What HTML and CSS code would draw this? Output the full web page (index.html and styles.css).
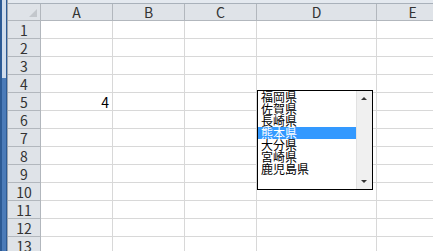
FILE: index.html
```html
<!DOCTYPE html>
<html lang="ja">
  <head>
    <meta charset="UTF-8" />
    <title>Sheet1</title>
    <link rel="stylesheet" href="styles.css">
  </head>
  <body>
    <div class="window">
      <div class="edge"><div class="edge-light"></div><div class="edge-dark"></div></div>
      <div class="sheet">
        <div class="topbar"></div>
        <div class="grid">
          <div class="hd corner"><span class="tri"></span></div>
          <div class="hd col">A</div>
          <div class="hd col">B</div>
          <div class="hd col">C</div>
          <div class="hd col">D</div>
          <div class="hd col">E</div>

          <div class="hd row">1</div><div class="c"></div><div class="c"></div><div class="c"></div><div class="c"></div><div class="c"></div>
          <div class="hd row">2</div><div class="c"></div><div class="c"></div><div class="c"></div><div class="c"></div><div class="c"></div>
          <div class="hd row">3</div><div class="c"></div><div class="c"></div><div class="c"></div><div class="c"></div><div class="c"></div>
          <div class="hd row">4</div><div class="c"></div><div class="c"></div><div class="c"></div><div class="c"></div><div class="c"></div>
          <div class="hd row">5</div><div class="c num">4</div><div class="c"></div><div class="c"></div><div class="c"></div><div class="c"></div>
          <div class="hd row">6</div><div class="c"></div><div class="c"></div><div class="c"></div><div class="c"></div><div class="c"></div>
          <div class="hd row">7</div><div class="c"></div><div class="c"></div><div class="c"></div><div class="c"></div><div class="c"></div>
          <div class="hd row">8</div><div class="c"></div><div class="c"></div><div class="c"></div><div class="c"></div><div class="c"></div>
          <div class="hd row">9</div><div class="c"></div><div class="c"></div><div class="c"></div><div class="c"></div><div class="c"></div>
          <div class="hd row">10</div><div class="c"></div><div class="c"></div><div class="c"></div><div class="c"></div><div class="c"></div>
          <div class="hd row">11</div><div class="c"></div><div class="c"></div><div class="c"></div><div class="c"></div><div class="c"></div>
          <div class="hd row">12</div><div class="c"></div><div class="c"></div><div class="c"></div><div class="c"></div><div class="c"></div>
          <div class="hd row">13</div><div class="c"></div><div class="c"></div><div class="c"></div><div class="c"></div><div class="c"></div>
        </div>

        <!-- form control list box floating over the cells -->
        <div class="listbox">
          <ul class="items">
            <li>福岡県</li>
            <li>佐賀県</li>
            <li>長崎県</li>
            <li class="selected">熊本県</li>
            <li>大分県</li>
            <li>宮崎県</li>
            <li>鹿児島県</li>
          </ul>
          <div class="scrollbar">
            <span class="arrow up"></span>
            <span class="arrow down"></span>
          </div>
        </div>
      </div>
    </div>
  </body>
</html>
```

FILE: styles.css
```css
body {
  margin: 0;
  padding: 0;
  background: #fff;
  overflow: hidden;
  font-family: "Noto Sans CJK JP", "Noto Sans", sans-serif;
}
.window {
  display: flex;
  height: 251px;
  width: 433px;
}
.edge {
  width: 8px;
  flex: none;
  display: flex;
  flex-direction: column;
  background: #2c5a94;
  border-right: 1px solid #9aa4b0;
  box-sizing: border-box;
  padding-left: 2px;
  padding-right: 1px;
}
.edge-light {
  height: 78px;
  background: #cfdcec;
}
.edge-dark {
  flex: 1;
  background: #4b7bb8;
}
.sheet {
  position: relative;
  flex: 1;
  overflow: hidden;
}
.topbar {
  height: 3px;
  background: #e4e9ef;
  border-bottom: 1px solid #a9b1ba;
}
.grid {
  display: grid;
  grid-template-columns: 33px 72px 72px 72px 120px 72px;
  grid-template-rows: 17px repeat(13, 18px);
}
.hd {
  background: #dfe3e8;
  color: #333;
  font-size: 14px;
  line-height: 17px;
  text-align: center;
  box-sizing: border-box;
  border-right: 1px solid #b2b7bd;
  border-bottom: 1px solid #b2b7bd;
}
.col {
  line-height: 17px;
}
.row {
  line-height: 18px;
}
.corner {
  position: relative;
}
.tri {
  position: absolute;
  right: 3px;
  bottom: 3px;
  width: 0;
  height: 0;
  border-left: 8px solid transparent;
  border-bottom: 8px solid #c3c7cc;
}
.c {
  box-sizing: border-box;
  border-right: 1px solid #d8d8d8;
  border-bottom: 1px solid #d8d8d8;
}
.num {
  text-align: right;
  padding-right: 3px;
  font-size: 14px;
  line-height: 18px;
  color: #000;
}
.listbox {
  position: absolute;
  left: 249px;
  top: 90px;
  width: 116px;
  height: 100px;
  box-sizing: border-box;
  border: 1px solid #000;
  background: #fff;
  display: flex;
}
.items {
  list-style: none;
  margin: 0;
  padding: 0;
  flex: 1;
}
.items li {
  font-size: 12px;
  line-height: 12px;
  height: 12px;
  padding-left: 3px;
  color: #000;
  white-space: nowrap;
}
.items li.selected {
  background: #3399ff;
  color: #fff;
}
.scrollbar {
  width: 15px;
  flex: none;
  background: #f0f0f0;
  border-left: 1px solid #e2e2e2;
  position: relative;
}
.arrow {
  position: absolute;
  left: 4px;
  width: 0;
  height: 0;
  border-left: 3px solid transparent;
  border-right: 3px solid transparent;
}
.arrow.up {
  top: 6px;
  border-bottom: 3px solid #333;
}
.arrow.down {
  bottom: 6px;
  border-top: 3px solid #333;
}
```
